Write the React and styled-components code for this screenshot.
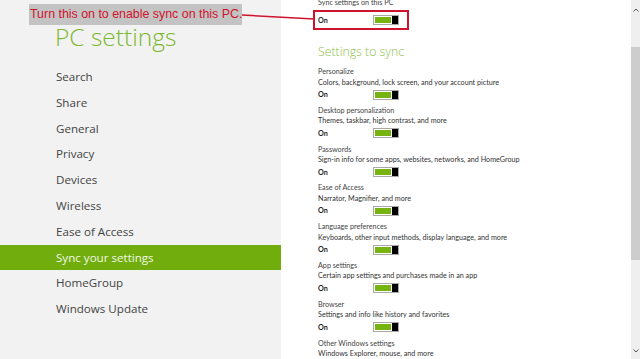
import styled, { createGlobalStyle } from "styled-components";

const Global = createGlobalStyle`
  html, body {
    margin: 0;
    padding: 0;
    background: #ffffff;
    overflow: hidden;
  }
  * {
    box-sizing: border-box;
  }
`;

const Screen = styled.div`
  position: relative;
  display: flex;
  width: 640px;
  height: 359px;
  overflow: hidden;
  font-family: "Open Sans", "Noto Sans", sans-serif;
`;

const Sidebar = styled.div`
  width: 281px;
  flex-shrink: 0;
  background: #f2f2f2;
  padding-top: 20px;
`;

const Title = styled.h1`
  margin: 0 0 10px 55px;
  font-size: 24.5px;
  font-weight: 300;
  line-height: 34px;
  color: #7cb82f;
`;

const Nav = styled.ul`
  list-style: none;
  margin: 0;
  padding: 0;
`;

const NavItem = styled.li`
  height: 25.8px;
  line-height: 25.8px;
  padding-left: 56px;
  font-size: 11.6px;
  color: ${(p) => (p.$active ? "#f2f8e8" : "#444444")};
  background: ${(p) => (p.$active ? "#71ad0c" : "transparent")};
`;

const Content = styled.div`
  flex: 1;
  padding-left: 37px;
  margin-top: -2px;
  font-family: "Lato", "Open Sans", sans-serif;
`;

const TopLabel = styled.div`
  font-size: 7.2px;
  line-height: 10px;
  color: #444;
`;

const SectionHeading = styled.h2`
  margin: 17.5px 0 7px 0;
  font-family: "Open Sans", "Noto Sans", sans-serif;
  font-size: 12.3px;
  font-weight: 300;
  line-height: 16px;
  color: #8dc048;
`;

const Setting = styled.div`
  margin-bottom: 4.8px;
`;

const SettingName = styled.div`
  font-size: 7.2px;
  line-height: 10.5px;
  color: #444;
`;

const SettingDesc = styled.div`
  font-size: 7.2px;
  line-height: 10.5px;
  color: #333;
`;

const ToggleRow = styled.div`
  display: flex;
  align-items: center;
  height: 13px;
  margin-top: ${(p) => (p.$gap ? "5.5px" : "0")};
`;

const OnLabel = styled.span`
  width: 55px;
  font-size: 7.2px;
  font-weight: 700;
  color: #222;
`;

const Toggle = styled.div`
  display: flex;
  width: 26px;
  height: 10px;
  border: 1px solid #a8a8a8;
  background: #77b40f;
`;

const Track = styled.div`
  flex: 1;
  border: 1px solid #ffffff;
  background: #77b40f;
`;

const Thumb = styled.div`
  width: 6px;
  background: #000;
`;

const Scrollbar = styled.div`
  width: 9px;
  flex-shrink: 0;
  background: #efefef;
  display: flex;
  flex-direction: column;
  align-items: center;
`;

const ArrowBox = styled.div`
  display: flex;
  justify-content: center;
  align-items: ${(p) => (p.$down ? "flex-end" : "flex-start")};
  height: ${(p) => (p.$down ? "12px" : "47px")};
  padding: ${(p) => (p.$down ? "0 0 6px" : "8px 0 0")};
  width: 100%;
`;

const ScrollThumb = styled.div`
  width: 9px;
  height: 213px;
  background: #cdcdcd;
`;

const Spacer = styled.div`
  flex: 1;
`;

const Annotation = styled.div`
  position: absolute;
  left: 29px;
  top: 4px;
  width: 213px;
  height: 21px;
  background: #c3c3c3;
  color: #d0132d;
  font-family: "Liberation Sans", "Noto Sans", sans-serif;
  font-size: 12.4px;
  line-height: 21px;
  white-space: nowrap;
  padding-left: 1px;
`;

const Callout = styled.svg`
  position: absolute;
  left: 0;
  top: 0;
  pointer-events: none;
`;

const navItems = [
  "Search",
  "Share",
  "General",
  "Privacy",
  "Devices",
  "Wireless",
  "Ease of Access",
  "Sync your settings",
  "HomeGroup",
  "Windows Update",
];

const settings = [
  ["Personalize", "Colors, background, lock screen, and your account picture"],
  ["Desktop personalization", "Themes, taskbar, high contrast, and more"],
  ["Passwords", "Sign-in info for some apps, websites, networks, and HomeGroup"],
  ["Ease of Access", "Narrator, Magnifier, and more"],
  ["Language preferences", "Keyboards, other input methods, display language, and more"],
  ["App settings", "Certain app settings and purchases made in an app"],
  ["Browser", "Settings and info like history and favorites"],
  ["Other Windows settings", "Windows Explorer, mouse, and more"],
];

function Switch({ gap }) {
  return (
    <ToggleRow $gap={gap}>
      <OnLabel>On</OnLabel>
      <Toggle>
        <Track />
        <Thumb />
      </Toggle>
    </ToggleRow>
  );
}

function Chevron({ down }) {
  return (
    <svg width="6" height="4" viewBox="0 0 6 4">
      <path
        d={down ? "M0.5 0.5 L3 3 L5.5 0.5" : "M0.5 3.5 L3 1 L5.5 3.5"}
        fill="none"
        stroke="#555"
        strokeWidth="1"
      />
    </svg>
  );
}

export default function App() {
  return (
    <Screen>
      <Global />
      <Sidebar>
        <Title>PC settings</Title>
        <Nav>
          {navItems.map((n) => (
            <NavItem key={n} $active={n === "Sync your settings"}>
              {n}
            </NavItem>
          ))}
        </Nav>
      </Sidebar>
      <Content>
        <TopLabel>Sync settings on this PC</TopLabel>
        <Switch gap />
        <SectionHeading>Settings to sync</SectionHeading>
        {settings.map(([name, desc]) => (
          <Setting key={name}>
            <SettingName>{name}</SettingName>
            <SettingDesc>{desc}</SettingDesc>
            <Switch />
          </Setting>
        ))}
      </Content>
      <Scrollbar>
        <ArrowBox>
          <Chevron />
        </ArrowBox>
        <ScrollThumb />
        <Spacer />
        <ArrowBox $down>
          <Chevron down />
        </ArrowBox>
      </Scrollbar>
      <Annotation>Turn this on to enable sync on this PC.</Annotation>
      <Callout width="640" height="40">
        <line x1="242" y1="15" x2="314" y2="19" stroke="#d0132d" strokeWidth="1.5" />
        <rect x="314" y="11" width="94" height="18" fill="none" stroke="#d0132d" strokeWidth="2" />
      </Callout>
    </Screen>
  );
}
